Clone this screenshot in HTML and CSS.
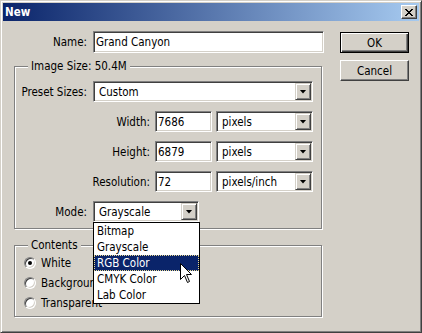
FILE: index.html
```html
<!DOCTYPE html>
<html lang="en">
<head>
    <meta charset="UTF-8">
    <title>New</title>
    <link rel="stylesheet" href="styles.css">
</head>
<body>
    <div class="window">
        <div class="titlebar">
            <span class="title">New</span>
            <span class="close-btn">
                <svg width="8" height="7" viewBox="0 0 8 7"><path d="M0 0h2v1H0z M6 0h2v1H6z M1 1h2v1H1z M5 1h2v1H5z M2 2h4v1H2z M3 3h2v1H3z M2 4h4v1H2z M1 5h2v1H1z M5 5h2v1H5z M0 6h2v1H0z M6 6h2v1H6z" fill="#000"/></svg>
            </span>
        </div>

        <div class="dialog">
            <div class="main">
                <div class="row name-row">
                    <span class="lbl lbl-short">Name:</span>
                    <div class="field name-field">Grand Canyon</div>
                </div>

                <div class="group size-group">
                    <div class="group-title">Image Size: 50.4M</div>
                    <div class="row first">
                        <span class="lbl lbl-short">Preset Sizes:</span>
                        <div class="combo preset">Custom<span class="drop-btn"></span></div>
                    </div>
                    <div class="row">
                        <span class="lbl lbl-long">Width:</span>
                        <div class="field num">7686</div>
                        <div class="combo unit">pixels<span class="drop-btn"></span></div>
                    </div>
                    <div class="row">
                        <span class="lbl lbl-long">Height:</span>
                        <div class="field num">6879</div>
                        <div class="combo unit">pixels<span class="drop-btn"></span></div>
                    </div>
                    <div class="row">
                        <span class="lbl lbl-long">Resolution:</span>
                        <div class="field num">72</div>
                        <div class="combo unit">pixels/inch<span class="drop-btn"></span></div>
                    </div>
                    <div class="row">
                        <span class="lbl lbl-short">Mode:</span>
                        <div class="combo mode">Grayscale<span class="drop-btn"></span>
                            <ul class="droplist">
                                <li>Bitmap</li>
                                <li>Grayscale</li>
                                <li class="selected">RGB Color
                                    <svg class="cursor" width="12" height="20" viewBox="0 0 12 20"><path d="M0.5 0.5V16.5L4.5 12.5L7.5 19.5L9.5 18.5L6.5 11.5H11.5Z" fill="#fff" stroke="#000" stroke-width="1"/></svg>
                                </li>
                                <li>CMYK Color</li>
                                <li>Lab Color</li>
                            </ul>
                        </div>
                    </div>
                </div>

                <div class="group contents-group">
                    <div class="group-title">Contents</div>
                    <div class="radio-row first"><span class="radio checked"></span>White</div>
                    <div class="radio-row"><span class="radio"></span><span class="hidden-part">Background Color</span></div>
                    <div class="radio-row"><span class="radio"></span>Transparent</div>
                </div>
            </div>

            <div class="buttons">
                <div class="btn default">OK</div>
                <div class="btn">Cancel</div>
            </div>
        </div>
    </div>
</body>
</html>
```

FILE: styles.css
```css
* {
    box-sizing: border-box;
}

body {
    margin: 0;
    background: #d4d0c8;
    font-family: "DejaVu Sans Condensed", "DejaVu Sans", sans-serif;
    font-size: 11.5px;
    color: #000;
}

/* marco de la ventana */
.window {
    width: 422px;
    height: 333px;
    padding: 2px;
    background: #d4d0c8;
    border: 1px solid;
    border-color: #d4d0c8 #404040 #404040 #d4d0c8;
    box-shadow: inset 1px 1px #fff, inset -1px -1px #808080;
    overflow: hidden;
}

.titlebar {
    height: 18px;
    display: flex;
    align-items: center;
    justify-content: space-between;
    padding: 0 2px;
    background: linear-gradient(to right, #0a246a, #a6caf0);
}

.title {
    color: #fff;
    font-weight: bold;
    line-height: 18px;
}

.close-btn {
    width: 16px;
    height: 14px;
    display: flex;
    align-items: center;
    justify-content: center;
    background: #d4d0c8;
    border: 1px solid;
    border-color: #fff #404040 #404040 #fff;
    box-shadow: inset -1px -1px #808080;
}

.dialog {
    display: flex;
    padding: 10px 0 0 11px;
}

.main {
    width: 310px;
    flex: none;
}

.row {
    display: flex;
    align-items: center;
    height: 21px;
}

.name-row {
    height: 22px;
}

.lbl {
    flex: none;
    text-align: right;
    margin-right: 6px;
}

.name-row .lbl {
    width: 73px;
}

.lbl-short {
    width: 72px;
}

.lbl-long {
    width: 135px;
    margin-right: 5px;
}

/* campos hundidos */
.field,
.combo {
    height: 21px;
    display: flex;
    align-items: center;
    background: #fff;
    border: 1px solid;
    border-color: #808080 #fff #fff #808080;
    box-shadow: inset 1px 1px #404040, inset -1px -1px #d4d0c8;
    padding-left: 2px;
    white-space: nowrap;
}

.name-field {
    width: 231px;
    height: 22px;
}

.num {
    width: 57px;
    margin-right: 4px;
}

.combo {
    position: relative;
    padding-left: 5px;
}

.preset {
    width: 220px;
}

.unit {
    width: 97px;
}

.mode {
    width: 106px;
}

.drop-btn {
    margin-left: auto;
    margin-right: 1px;
    width: 16px;
    height: 17px;
    display: flex;
    align-items: center;
    justify-content: center;
    background: #d4d0c8;
    border: 1px solid;
    border-color: #d4d0c8 #404040 #404040 #d4d0c8;
    box-shadow: inset 1px 1px #fff, inset -1px -1px #808080;
}

.drop-btn::after {
    content: "";
    width: 7px;
    height: 4px;
    background: #000;
    clip-path: polygon(0 0, 100% 0, 50% 100%);
}

/* cajas de grupo */
.group {
    width: 308px;
    border: 1px solid #808080;
    box-shadow: inset 1px 1px #fff, 1px 1px #fff;
}

.group-title {
    display: table;
    margin: -7px 0 0 13px;
    padding: 0 3px;
    line-height: 13px;
    background: #d4d0c8;
}

.size-group {
    margin-top: 13px;
    padding-bottom: 6px;
}

.size-group .row {
    margin-top: 9px;
}

.size-group .row.first {
    margin-top: 8px;
}

.contents-group {
    margin-top: 16px;
    padding-bottom: 3px;
}

.radio-row {
    display: flex;
    align-items: center;
    height: 20px;
    padding-left: 9px;
    white-space: nowrap;
}

.radio-row.first {
    margin-top: 1px;
}

/* la lista tapa este texto */
.hidden-part {
    width: 52px;
    overflow: hidden;
}

.radio {
    width: 12px;
    height: 12px;
    margin-right: 5px;
    border-radius: 50%;
    background: #fff;
    border: 1px solid;
    border-color: #808080 #fff #fff #808080;
    box-shadow: inset 1px 1px #404040, inset -1px -1px #d4d0c8;
    display: flex;
    align-items: center;
    justify-content: center;
}

.radio.checked::after {
    content: "";
    width: 4px;
    height: 4px;
    border-radius: 50%;
    background: #000;
}

/* lista desplegada */
.droplist {
    position: absolute;
    top: calc(100% + 1px);
    left: -1px;
    width: 107px;
    margin: 0;
    padding: 0;
    list-style: none;
    background: #fff;
    border: 1px solid #000;
    z-index: 2;
}

.droplist li {
    position: relative;
    height: 16px;
    line-height: 16px;
    padding-left: 3px;
}

.droplist li.selected {
    background: #0a246a;
    color: #fff;
    outline: 1px dotted #e8d890;
    outline-offset: -1px;
}

.cursor {
    position: absolute;
    left: 86px;
    top: 8px;
}

/* botones */
.buttons {
    display: flex;
    flex-direction: column;
    gap: 7px;
    margin-left: 16px;
    padding-top: 1px;
}

.btn {
    width: 69px;
    height: 21px;
    display: flex;
    align-items: center;
    justify-content: center;
    border: 1px solid;
    border-color: #fff #404040 #404040 #fff;
    box-shadow: inset -1px -1px #808080;
}

.btn.default {
    border-color: #000;
    box-shadow: inset 1px 1px #fff, inset -1px -1px #404040, inset -2px -2px #808080;
}
```
